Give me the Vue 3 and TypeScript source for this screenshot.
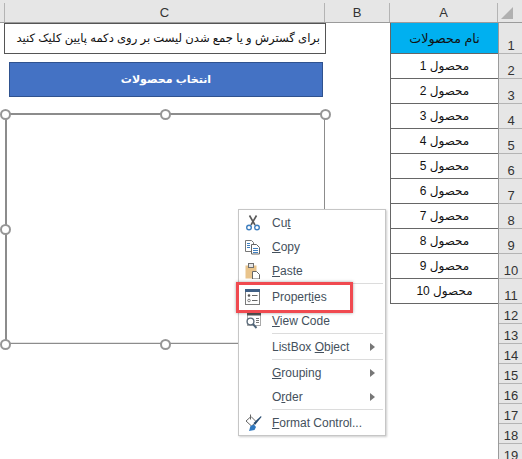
<script setup lang="ts">
interface MenuItem {
  label: string
  key?: number
  icon?: string
  arrow?: boolean
  sep?: boolean
}

const products = Array.from({ length: 10 }, (_, i) => `محصول ${i + 1}`)
const rowNumbers = Array.from({ length: 19 }, (_, i) => i + 1)

const handles = [
  { x: 0, y: 0 }, { x: 50, y: 0 }, { x: 100, y: 0 },
  { x: 0, y: 50 }, { x: 100, y: 50 },
  { x: 0, y: 100 }, { x: 50, y: 100 }, { x: 100, y: 100 },
]

const menu: MenuItem[] = [
  { label: 'Cut', key: 2, icon: 'cut' },
  { label: 'Copy', key: 0, icon: 'copy' },
  { label: 'Paste', key: 0, icon: 'paste', sep: true },
  { label: 'Properties', key: 7, icon: 'props' },
  { label: 'View Code', key: 0, icon: 'code', sep: true },
  { label: 'ListBox Object', key: 8, arrow: true, sep: true },
  { label: 'Grouping', key: 0, arrow: true },
  { label: 'Order', key: 1, arrow: true, sep: true },
  { label: 'Format Control...', key: 0, icon: 'format' },
]

function parts(m: MenuItem) {
  const k = m.key ?? 0
  return [m.label.slice(0, k), m.label.charAt(k), m.label.slice(k + 1)]
}
</script>

<template>
  <div class="sheet">
    <div class="col-head">
      <div class="h-d"></div>
      <div class="h-c">C</div>
      <div class="h-b">B</div>
      <div class="h-a">A</div>
      <div class="corner"><i></i></div>
    </div>

    <div class="body">
      <div class="col-c">
        <div class="note" dir="rtl">برای گسترش و یا جمع شدن لیست بر روی دکمه پایین کلیک کنید</div>
      </div>
      <div class="col-b"></div>
      <div class="col-a">
        <div class="cell title">نام محصولات</div>
        <div v-for="p in products" :key="p" class="cell" dir="rtl">{{ p }}</div>
      </div>
      <div class="rows">
        <div v-for="n in rowNumbers" :key="n" class="rownum">{{ n }}</div>
      </div>
    </div>

    <div class="shape-btn">انتخاب محصولات</div>

    <div class="listbox">
      <div class="frame"></div>
      <b v-for="(h, i) in handles" :key="i" class="handle" :style="{ left: h.x + '%', top: h.y + '%' }"></b>
    </div>

    <div class="menu">
      <template v-for="m in menu" :key="m.label">
        <div class="item">
          <span class="ico">
            <svg v-if="m.icon === 'cut'" viewBox="0 0 16 16" width="16" height="16" fill="none">
              <path d="M4.500 0.500l5.500 9.500M11.500 0.500L6 10" stroke="#595959" stroke-width="1.600" />
              <circle cx="4" cy="12.500" r="2.300" stroke="#3f7fbf" stroke-width="1.400" />
              <circle cx="12" cy="12.500" r="2.300" stroke="#3f7fbf" stroke-width="1.400" />
            </svg>
            <svg v-else-if="m.icon === 'copy'" viewBox="0 0 16 16" width="16" height="16" fill="#fff">
              <path d="M0.500 1.500h6l2 2v9h-8z" stroke="#777" />
              <path d="M6.500 5.500h5l3 3v6.500h-8z" stroke="#666" />
              <path d="M2 4.500h3M2 6.500h3M2 8.500h3" stroke="#3f7fbf" />
              <path d="M8 9.500h5M8 11.500h5M8 13.500h5" stroke="#3f7fbf" />
            </svg>
            <svg v-else-if="m.icon === 'paste'" viewBox="0 0 16 16" width="16" height="16">
              <rect x="0.500" y="2.500" width="11" height="13" fill="#e9c48c" />
              <rect x="3.500" y="0.500" width="5" height="4" fill="#e6e6e6" stroke="#707070" />
              <path d="M7.500 8.500h4l3 3v4.500h-7z" fill="#fff" stroke="#666" />
            </svg>
            <svg v-else-if="m.icon === 'props'" viewBox="0 0 16 16" width="16" height="16" fill="#fff">
              <rect x="0.500" y="0.500" width="14" height="15" stroke="#7a7a7a" />
              <rect x="0" y="0" width="15" height="3" fill="#3f5f85" />
              <circle cx="4" cy="6.500" r="1.300" fill="#555" />
              <circle cx="4" cy="11.500" r="1.300" stroke="#666" stroke-width=".8" />
              <path d="M7 6.500h5.500M7 11.500h5.500" stroke="#666" />
            </svg>
            <svg v-else-if="m.icon === 'code'" viewBox="0 0 16 16" width="16" height="16" fill="#fff">
              <rect x="2.500" y="0.500" width="13" height="12" stroke="#aaa" />
              <rect x="2" y="0" width="14" height="2.500" fill="#555" />
              <circle cx="5.500" cy="8.500" r="3.400" fill="#fff" stroke="#5b6b7a" stroke-width="1.400" />
              <path d="M8 11l3.500 4" stroke="#4f6478" stroke-width="1.900" />
              <path d="M11 5.500h3M11 7.500h3M11 9.500h3" stroke="#777" />
            </svg>
            <svg v-else-if="m.icon === 'format'" viewBox="0 0 18 18" width="18" height="18" fill="none">
              <path d="M1 7l5-4.500 5.500 5.500-5 4z" fill="#fff" stroke="#666" />
              <path d="M5.500 0.500v5" stroke="#666" />
              <path d="M4 17l1.500-5 3.500-1.500 2 2.500-1.500 3z" fill="#2f78c0" />
              <path d="M10 11l6.500-8-0.500-1-7.500 7z" fill="#274b70" />
            </svg>
          </span>
          <span class="label">{{ parts(m)[0] }}<u>{{ parts(m)[1] }}</u>{{ parts(m)[2] }}</span>
          <i v-if="m.arrow" class="arrow"></i>
        </div>
        <div v-if="m.sep" class="sep"></div>
      </template>
    </div>

    <div class="callout"></div>
  </div>
</template>

<style scoped>
.sheet {
  position: relative;
  width: 522px;
  height: 459px;
  overflow: hidden;
  background: #fff;
  font-family: "Liberation Sans", "DejaVu Sans", sans-serif;
  color: #111;
}
.col-head {
  display: grid;
  grid-template-columns: 5px 320px 65px 108px 24px;
  height: 23px;
  box-sizing: border-box;
  background: #e6e6e6;
  border-top: 3px solid #e6e6e6;
  border-bottom: 1px solid #9b9b9b;
  font-size: 13px;
  color: #333;
}
.h-d, .h-c, .h-b, .h-a {
  display: flex;
  align-items: center;
  justify-content: center;
  border-right: 1px solid #b4b4b4;
}
.corner {
  position: relative;
}
.corner i {
  position: absolute;
  right: 9px;
  top: 4px;
  width: 0;
  height: 0;
  border-style: solid;
  border-width: 0 0 12px 12px;
  border-color: transparent transparent #b0b0b0 transparent;
}
.body {
  display: grid;
  grid-template-columns: 325px 65px 108px 24px;
}
.col-c {
  padding-left: 4px;
}
.note {
  box-sizing: border-box;
  width: 322px;
  height: 31px;
  border: 1px solid #555;
  font-size: 11.6px;
  line-height: 28px;
  white-space: nowrap;
  overflow: hidden;
  padding-right: 5px;
  text-align: right;
}
.cell {
  box-sizing: border-box;
  height: 25px;
  border-left: 1px solid #666;
  border-bottom: 1px solid #666;
  display: flex;
  align-items: center;
  justify-content: center;
  font-size: 12px;
}
.title {
  height: 31px;
  background: #00b0f0;
  font-size: 12.700px;
}
.rows {
  border-left: 1px solid #9b9b9b;
  background: #e6e6e6;
  font-size: 13px;
  color: #333;
}
.rownum {
  box-sizing: border-box;
  height: 20px;
  border-bottom: 1px solid #b4b4b4;
  display: flex;
  align-items: flex-end;
  justify-content: center;
  padding-left: 1px;
}
.rownum:first-child {
  height: 31px;
}
.rownum:nth-child(n+2):nth-child(-n+11) {
  height: 25px;
}
.shape-btn {
  position: absolute;
  left: 9px;
  top: 62px;
  width: 314px;
  height: 35px;
  box-sizing: border-box;
  background: #4472c4;
  border: 1px solid #2f528f;
  color: #fff;
  font-size: 11px;
  font-weight: 700;
  display: flex;
  align-items: center;
  justify-content: center;
}
.listbox {
  position: absolute;
  left: 5px;
  top: 114px;
  width: 320px;
  height: 230px;
}
.frame {
  position: absolute;
  inset: -1px 0 0 0;
  box-sizing: border-box;
  border: 2px solid #8c8c8c;
  border-bottom-width: 1px;
  border-right-width: 1px;
  box-shadow: inset 0 -1px 0 #e4e4e4;
}
.handle {
  position: absolute;
  width: 11px;
  height: 11px;
  box-sizing: border-box;
  margin: -5px 0 0 -5px;
  border-radius: 50%;
  border: 2px solid #969696;
  background: #fff;
}
.menu {
  position: absolute;
  left: 238px;
  top: 209px;
  width: 148px;
  box-sizing: border-box;
  padding: 1px 2px 0;
  background: #fff;
  border: 1px solid #c6c6c6;
  box-shadow: 1px 1px 2px rgba(0, 0, 0, 0.2);
  font-size: 12px;
  color: #4a4a4a;
}
.item {
  display: flex;
  align-items: center;
  height: 24px;
  position: relative;
}
.ico {
  width: 30px;
  padding-left: 4px;
  box-sizing: border-box;
  display: flex;
  align-items: center;
}
.label {
  white-space: nowrap;
  padding-left: 1px;
  color: #44505c;
}
.arrow {
  position: absolute;
  right: 8px;
  top: 8px;
  width: 0;
  height: 0;
  border-style: solid;
  border-width: 4px 0 4px 5px;
  border-color: transparent transparent transparent #777;
}
.sep {
  height: 1px;
  margin: 0 0 1px 31px;
  background: #dcdcdc;
}
.callout {
  position: absolute;
  left: 236px;
  top: 282px;
  width: 117px;
  height: 31px;
  box-sizing: border-box;
  border: 3px solid #f04a50;
  box-shadow: 0 0 3px rgba(0, 0, 0, 0.35);
}
</style>
